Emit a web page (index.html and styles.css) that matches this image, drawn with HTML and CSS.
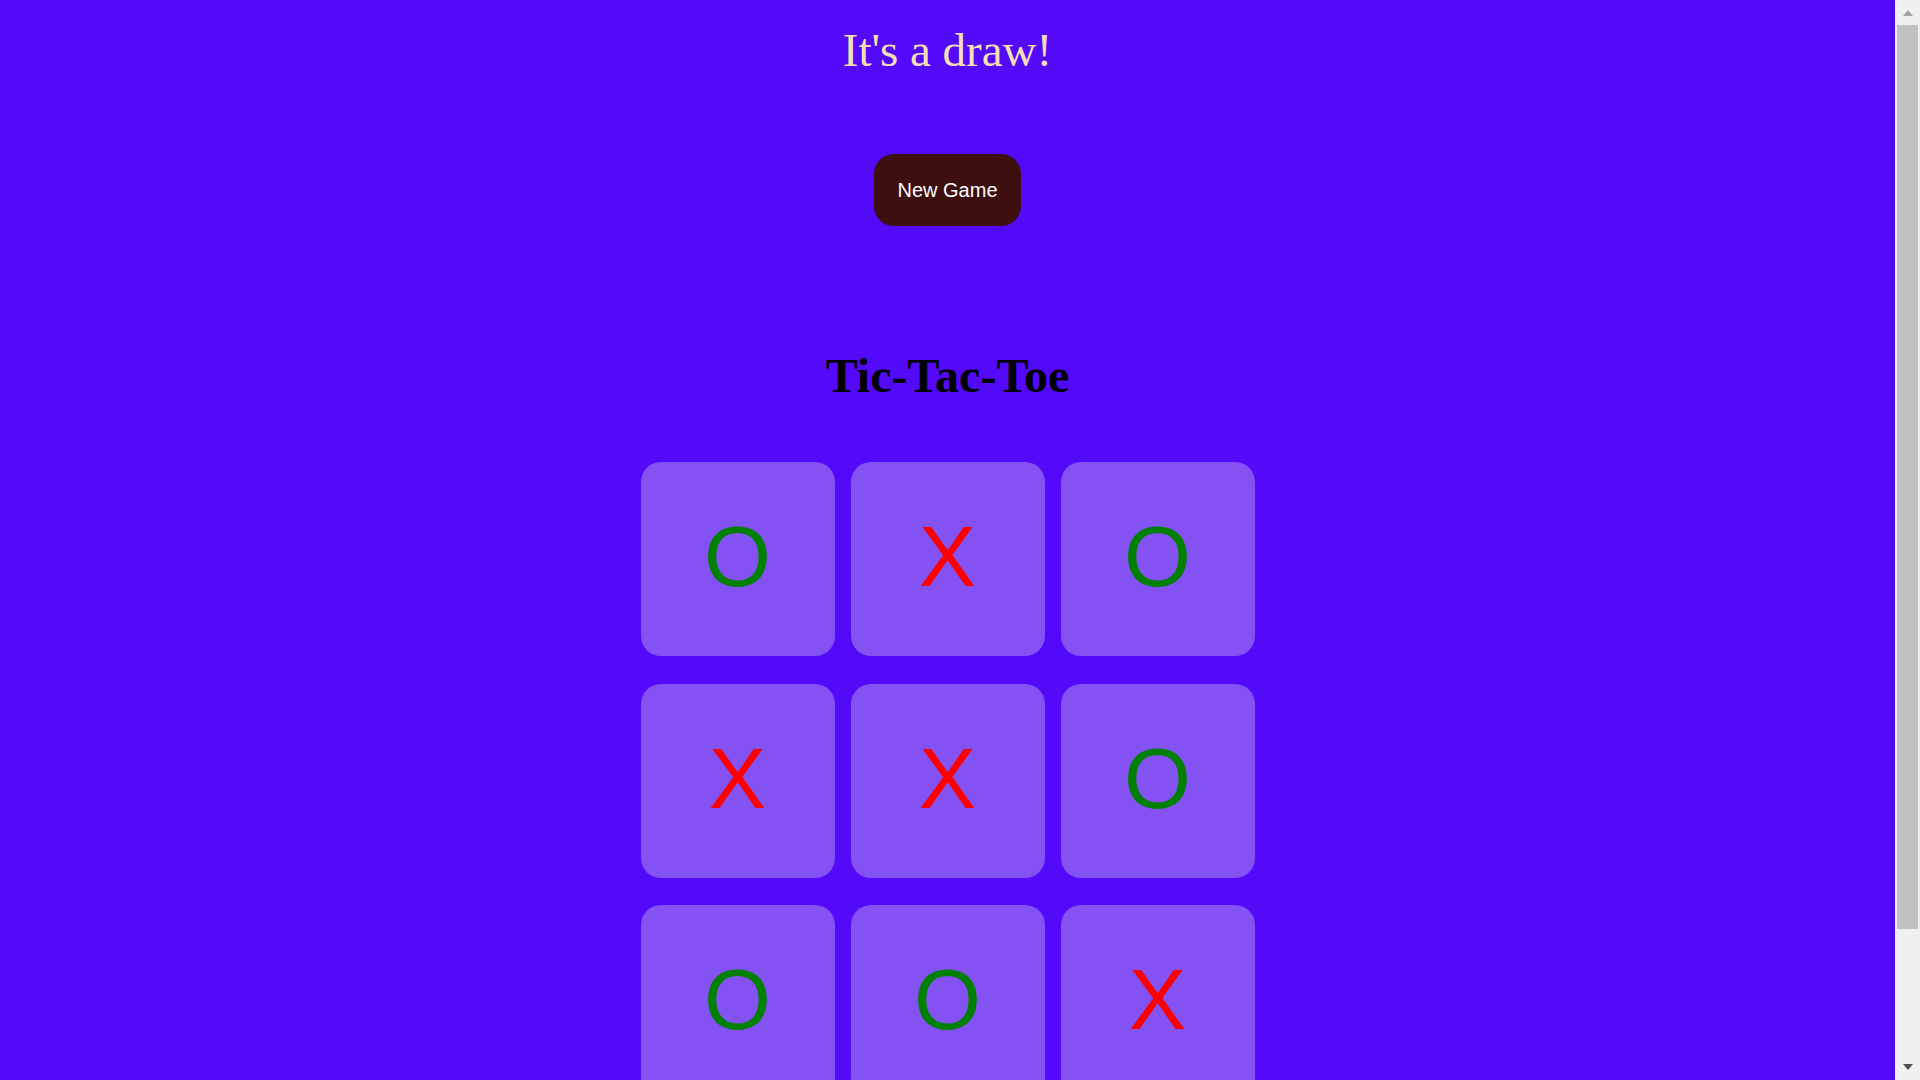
FILE: index.html
```html
<!DOCTYPE html>
<html lang="en">
<head>
<meta charset="utf-8">
<title>Tic-Tac-Toe</title>
<link rel="stylesheet" href="styles.css">
</head>
<body>
<div class="app">
  <h1 class="status">It's a draw!</h1>
  <button class="new-game">New Game</button>
  <h2 class="title">Tic-Tac-Toe</h2>
  <div class="board">
    <div class="cell o">O</div>
    <div class="cell x">X</div>
    <div class="cell o">O</div>
    <div class="cell x">X</div>
    <div class="cell x">X</div>
    <div class="cell o">O</div>
    <div class="cell o">O</div>
    <div class="cell o">O</div>
    <div class="cell x">X</div>
  </div>
</div>
<div class="scrollbar" aria-hidden="true">
  <div class="arrow up"></div>
  <div class="thumb"></div>
  <div class="arrow down"></div>
</div>
</body>
</html>
```
FILE: styles.css
```css
html, body {
  margin: 0;
  padding: 0;
  background: #520af8;
}
html::-webkit-scrollbar { display: none; }
html { scrollbar-width: none; }
.app {
  display: flex;
  flex-direction: column;
  align-items: center;
  padding: 0 25px 60px 0;
  font-family: "Liberation Serif", "Times New Roman", serif;
}
.status {
  margin: 24px 0 0;
  font-size: 47px;
  font-weight: normal;
  color: #f5deb3;
  line-height: 53px;
}
.new-game {
  margin-top: 77px;
  padding: 24px 23px;
  border: none;
  border-radius: 20px;
  background: #3d0f0f;
  color: #ffffff;
  font-family: "Liberation Sans", Arial, sans-serif;
  font-size: 20px;
  line-height: 24px;
  cursor: pointer;
}
.title {
  margin: 123px 0 0;
  font-size: 48px;
  font-weight: bold;
  color: #000000;
  line-height: 53px;
}
.board {
  margin-top: 60px;
  display: grid;
  grid-template-columns: repeat(3, 194px);
  grid-auto-rows: 194px;
  column-gap: 16px;
  row-gap: 27.5px;
}
.cell {
  display: flex;
  align-items: center;
  justify-content: center;
  padding-bottom: 5px;
  box-sizing: border-box;
  background: #8452f3;
  border-radius: 20px;
  font-family: "Liberation Sans", Arial, sans-serif;
  font-size: 86px;
}
.cell.o { color: #008000; }
.cell.x { color: #ff0000; }

.scrollbar {
  position: fixed;
  top: 0;
  right: 0;
  width: 25px;
  height: 100vh;
  background: #f0f0f0;
  display: flex;
  flex-direction: column;
  align-items: center;
}
.arrow {
  width: 0;
  height: 0;
  border-left: 5.5px solid transparent;
  border-right: 5.5px solid transparent;
}
.arrow.up {
  margin-top: 10px;
  border-bottom: 6px solid #a3a3a3;
}
.arrow.down {
  margin-top: auto;
  margin-bottom: 10px;
  border-top: 6px solid #505050;
}
.thumb {
  margin-top: 9px;
  width: 21px;
  height: 904px;
  background: #c1c1c1;
}
```
